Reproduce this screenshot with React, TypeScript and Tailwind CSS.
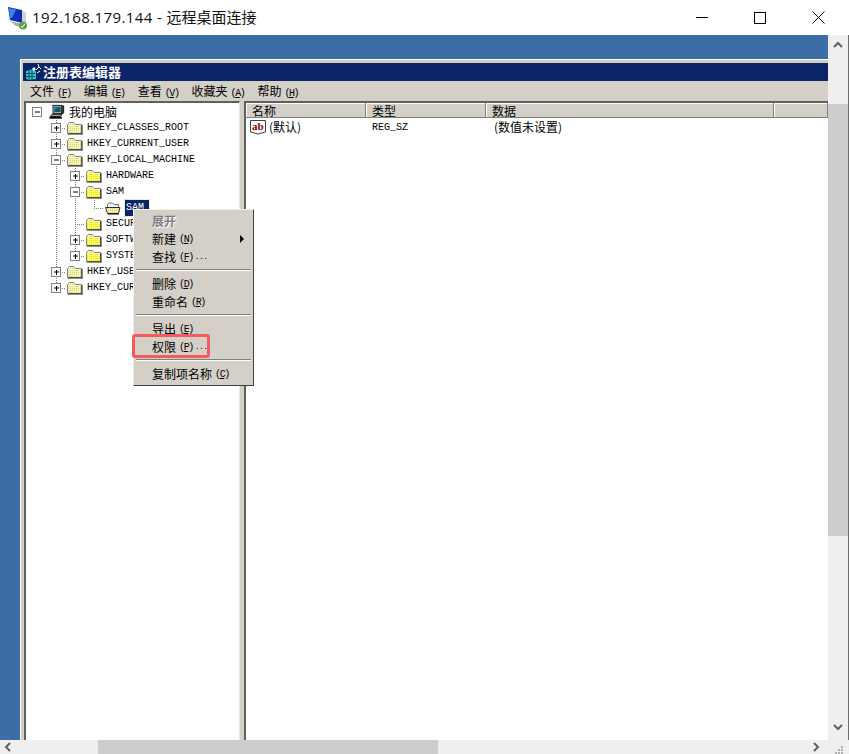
import React from "react";

const mono = "font-['Liberation_Mono','Noto_Sans_CJK_SC',monospace]";
const cjk = "font-['Noto_Sans_CJK_SC','Liberation_Mono',sans-serif]";

// Small "(F)" style access key after a menu label
const Key: React.FC<{ k: string }> = ({ k }) => (
  <span className={`${mono} ml-[3px] text-[10px] tracking-[-1.4px]`}>
    (<u>{k}</u>)
  </span>
);

const Folder: React.FC<{ open?: boolean; pale?: boolean }> = ({ open, pale }) => (
  <svg width="16" height="14" viewBox="0 0 16 14" className="shrink-0">
    <defs>
      <pattern id="ditherBright" width="2" height="2" patternUnits="userSpaceOnUse">
        <rect width="2" height="2" fill="#ffff00" />
        <rect width="1" height="1" fill="#fffff0" />
        <rect x="1" y="1" width="1" height="1" fill="#e8e860" />
      </pattern>
      <pattern id="ditherPale" width="2" height="2" patternUnits="userSpaceOnUse">
        <rect width="2" height="2" fill="#f0f080" />
        <rect width="1" height="1" fill="#ffffff" />
        <rect x="1" y="1" width="1" height="1" fill="#d8d890" />
      </pattern>
    </defs>
    {open ? (
      <g>
        <path d="M2.5 11 V3.5 L4 2 H7.5 L9 3.5 H13.5 V6" fill="#efefef" stroke="#707070" />
        <path d="M0.5 6.5 H15 L13.5 12.5 H2.5 Z" fill="url(#ditherPale)" stroke="#303030" />
        <path d="M3 13 H14" stroke="#000" />
      </g>
    ) : (
      <g>
        <path d="M0.5 12.5 V3.5 L2.5 1.5 H6.5 L8.5 3.5 H14.5 V12.5 Z" fill={pale ? "url(#ditherPale)" : "url(#ditherBright)"} stroke="#808080" />
        <path d="M1 4.5 H14" stroke="#fffff0" />
        <path d="M1 13 H15.5 M15 4 V13.5" stroke="#202020" />
      </g>
    )}
  </svg>
);

const Computer = () => (
  <svg width="16" height="16" viewBox="0 0 18 16" className="shrink-0">
    <rect x="4.5" y="0.5" width="10" height="9" fill="#c0c0c0" stroke="#000" />
    <rect x="6" y="2" width="7" height="6" fill="#0a5a6a" />
    <path d="M6 2 H10 V3 H7 V5 H6 Z" fill="#2a9aa8" />
    <path d="M14.5 2 L16.5 1 V9 L14.5 10 Z" fill="#606060" stroke="#000" />
    <path d="M3.5 10.5 H14.5 L13 13 H1.5 Z" fill="#a8a8a8" stroke="#000" />
    <path d="M0.5 14.5 H14.5" stroke="#000" strokeWidth="2" />
  </svg>
);

const Box: React.FC<{ x: number; open: boolean }> = ({ x, open }) => (
  <g>
    <rect x={x - 4.5} y="3.5" width="9" height="9" fill="#fff" stroke="#808080" />
    <path d={`M${x - 2} 8 H${x + 3}`} stroke="#000" />
    {!open && <path d={`M${x + 0.5} 6 V11`} stroke="#000" />}
  </g>
);

const dots = { stroke: "#808080", strokeDasharray: "1 1" };

type RowProps = {
  width: number;
  guides: number[];
  branchFrom?: number;
  branchTo?: number;
  endGuide?: boolean;
  box?: { x: number; open: boolean };
  icon: React.ReactNode;
  label: string;
  selected?: boolean;
  cn?: boolean;
};

// One tree line: dotted connectors and expander box, then icon and label
const TreeRow: React.FC<RowProps> = ({ width, guides, branchFrom, branchTo, endGuide, box, icon, label, selected, cn }) => (
  <div className="flex h-4 items-center whitespace-nowrap">
    <svg width={width} height="16" className="shrink-0">
      {guides.map((g) => (
        <path key={g} d={`M${g + 0.5} 0 V16`} {...dots} />
      ))}
      {branchFrom !== undefined && branchTo !== undefined && (
        <g>
          <path d={`M${branchFrom + 0.5} 0 V${endGuide ? 8 : 16}`} {...dots} />
          <path d={`M${branchFrom} 8.5 H${branchTo}`} {...dots} />
        </g>
      )}
      {box && <Box x={box.x} open={box.open} />}
    </svg>
    {icon}
    <span
      className={`ml-[4px] text-[10px] leading-4 ${cn ? `${cjk} -mt-px text-[12px]` : mono} ${
        selected ? "-ml-px h-4 bg-[#0a246a] pl-px pr-[5px] text-white outline-1 outline-dotted outline-[#d8d8a0]" : "text-black"
      }`}
    >
      {label}
    </span>
  </div>
);

const Tree = () => (
  <div className="pt-px">
    <TreeRow width={23} guides={[]} box={{ x: 11, open: true }} icon={<Computer />} label="我的电脑" cn />
    <TreeRow width={41} guides={[]} branchFrom={30} branchTo={40} box={{ x: 30, open: false }} icon={<Folder pale />} label="HKEY_CLASSES_ROOT" />
    <TreeRow width={41} guides={[]} branchFrom={30} branchTo={40} box={{ x: 30, open: false }} icon={<Folder pale />} label="HKEY_CURRENT_USER" />
    <TreeRow width={41} guides={[]} branchFrom={30} branchTo={40} box={{ x: 30, open: true }} icon={<Folder pale />} label="HKEY_LOCAL_MACHINE" />
    <TreeRow width={60} guides={[30]} branchFrom={49} branchTo={59} box={{ x: 49, open: false }} icon={<Folder />} label="HARDWARE" />
    <TreeRow width={60} guides={[30]} branchFrom={49} branchTo={59} box={{ x: 49, open: true }} icon={<Folder />} label="SAM" />
    <TreeRow width={79} guides={[30, 49]} branchFrom={68} branchTo={78} endGuide icon={<Folder open />} label="SAM" selected />
    <TreeRow width={60} guides={[30]} branchFrom={49} branchTo={59} icon={<Folder />} label="SECURITY" />
    <TreeRow width={60} guides={[30]} branchFrom={49} branchTo={59} box={{ x: 49, open: false }} icon={<Folder />} label="SOFTWARE" />
    <TreeRow width={60} guides={[30]} branchFrom={49} branchTo={59} endGuide box={{ x: 49, open: false }} icon={<Folder />} label="SYSTEM" />
    <TreeRow width={41} guides={[]} branchFrom={30} branchTo={40} box={{ x: 30, open: false }} icon={<Folder pale />} label="HKEY_USERS" />
    <TreeRow width={41} guides={[]} branchFrom={30} branchTo={40} endGuide box={{ x: 30, open: false }} icon={<Folder pale />} label="HKEY_CURRENT_CONFIG" />
  </div>
);

const MenuItem: React.FC<{ label: string; k?: string; dots?: boolean; disabled?: boolean; arrow?: boolean }> = ({
  label,
  k,
  dots: ell,
  disabled,
  arrow,
}) => (
  <div className={`relative flex h-[18px] items-center pl-[18px] text-[12px] ${disabled ? "font-bold text-[#808080] [text-shadow:1px_1px_0_#fff]" : "text-black"}`}>
    <span>{label}</span>
    {k && <Key k={k} />}
    {ell && <span className={`${mono} ml-[2px] text-[8px] tracking-[-0.6px]`}>...</span>}
    {arrow && (
      <svg width="5" height="8" viewBox="0 0 5 8" className="absolute right-2 top-[5px]">
        <path d="M0 0 L4 4 L0 8 Z" fill="#000" />
      </svg>
    )}
  </div>
);

const MenuSep = () => <div className="mx-[2px] mt-[3px] mb-[4px] h-[2px] border-t border-b border-t-[#808080] border-b-white" />;

const ContextMenu = () => (
  <div className={`${cjk} absolute left-[133px] top-[209px] h-[177px] w-[121px] border border-t-[#f2f0ea] border-l-[#f2f0ea] border-r-[#404040] border-b-[#404040] bg-[#d4d0c8] pt-[2px]`}>
    <MenuItem label="展开" disabled />
    <MenuItem label="新建" k="N" arrow />
    <MenuItem label="查找" k="F" dots />
    <MenuSep />
    <MenuItem label="删除" k="D" />
    <MenuItem label="重命名" k="R" />
    <MenuSep />
    <MenuItem label="导出" k="E" />
    <MenuItem label="权限" k="P" dots />
    <MenuSep />
    <MenuItem label="复制项名称" k="C" />
  </div>
);

const HeaderCell: React.FC<{ w: string; label?: string }> = ({ w, label }) => (
  <div className={`${w} h-[15px] shrink-0 border-r border-b border-r-[#808080] border-b-[#808080] pl-[6px] text-[12px] leading-[15px] shadow-[inset_1px_1px_0_#fff]`}>
    {label}
  </div>
);

const RdpIcon = () => (
  <svg width="22" height="24" viewBox="0 0 22 24" className="shrink-0">
    <path d="M1 1 L15 4 V17 L3 14 Z" fill="#0f2fb0" />
    <path d="M2 2 L9 3.5 L5 12 L3 12 Z" fill="#3f7fe8" />
    <path d="M15 4 L19 7 V19 L15 17 Z" fill="#cfd3da" />
    <path d="M3 15 L15 18 L19 20 L19 22 L9 20 Z" fill="#a9adb6" />
    <circle cx="16" cy="19.5" r="4" fill="#5f9e4a" />
    <path d="M14 20 L15.5 21.5 L18 17.5" stroke="#fff" strokeWidth="1" fill="none" />
  </svg>
);

const RegeditIcon = () => (
  <svg width="16" height="17" viewBox="0 0 16 17" className="shrink-0">
    <path d="M1 7 L9 5 L11 8 V15 L3 16 L1 14 Z" fill="#35c8c8" />
    <path d="M1 9.5 H10 M1 12.5 H10 M4 6 V16 M7 6 V16" stroke="#0a4a60" />
    <path d="M9 3 L11 5 L9 7 L7 5 Z" fill="#e8ffff" />
    <path d="M13 0 L14 3 L11 6 M14 3 L16 5 M12 9 L15 7" stroke="#fff" fill="none" />
  </svg>
);

export default function App() {
  return (
    <div className={`${cjk} relative flex h-[754px] w-[849px] flex-col overflow-hidden bg-white`}>
      {/* RDP title bar */}
      <div className="flex h-[35px] shrink-0 items-center pl-[7px]">
        <RdpIcon />
        <span className="ml-[3px] font-['Open_Sans','Noto_Sans_CJK_SC',sans-serif] text-[15px] text-[#111]">
          <span className="tracking-[0.4px]">192.168.179.144 - </span>远程桌面连接
        </span>
        <div className="ml-auto flex items-center gap-[46px] pr-[24px]">
          <div className="h-px w-3 bg-black" />
          <div className="h-3 w-3 border border-black" />
          <svg width="13" height="13" viewBox="0 0 13 13">
            <path d="M0.5 0.5 L12.5 12.5 M12.5 0.5 L0.5 12.5" stroke="#000" />
          </svg>
        </div>
      </div>

      <div className="flex min-h-0 flex-1">
        {/* Remote desktop */}
        <div className="flex w-[828px] shrink-0 flex-col bg-[#3a6ea5] pl-5 pt-6">
          <div className="flex min-h-0 flex-1 flex-col border-t border-l border-white bg-[#d4d0c8] pl-[1px] pt-[3px]">
            <div className="ml-[1px] flex h-[18px] shrink-0 items-center bg-[#0a246a] pl-[2px]">
              <RegeditIcon />
              <span className="ml-[2px] text-[13px] font-bold leading-[18px] text-white">注册表编辑器</span>
            </div>
            <div className="flex h-5 shrink-0 items-center gap-[13px] pl-[8px] text-[12px] text-black">
              <span>文件<Key k="F" /></span>
              <span>编辑<Key k="E" /></span>
              <span>查看<Key k="V" /></span>
              <span>收藏夹<Key k="A" /></span>
              <span>帮助<Key k="H" /></span>
            </div>
            <div className="flex min-h-0 flex-1 pl-[2px]">
              <div className="w-[216px] shrink-0 border-t-2 border-l-2 border-r border-t-[#606060] border-l-[#606060] border-r-[#e8e8e8] bg-white">
                <Tree />
              </div>
              <div className="w-[4px] shrink-0" />
              <div className="min-w-0 flex-1 border-t-2 border-l-2 border-t-[#606060] border-l-[#606060] bg-white">
                <div className="flex bg-[#d4d0c8] text-black">
                  <HeaderCell w="w-[120px]" label="名称" />
                  <HeaderCell w="w-[120px]" label="类型" />
                  <HeaderCell w="w-[288px]" label="数据" />
                  <HeaderCell w="w-[54px]" />
                </div>
                <div className="flex h-4 items-center pl-[4px] pt-[2px] text-[12px]">
                  <div className="flex w-[120px] items-center">
                    <svg width="17" height="16" viewBox="0 0 17 16" className="shrink-0">
                      <path d="M0.5 1.5 H15.5 V13 L8 15 L0.5 13 Z" fill="#fff" stroke="#404040" />
                      <text x="2" y="11" fill="#8b0000" fontFamily="Liberation Serif" fontWeight="bold" fontSize="11">ab</text>
                    </svg>
                    <span className="ml-[2px]">(默认)</span>
                  </div>
                  <span className={`${mono} w-[124px] pl-[2px] text-[10px]`}>REG_SZ</span>
                  <span>(数值未设置)</span>
                </div>
              </div>
            </div>
          </div>
        </div>
        {/* Vertical scrollbar */}
        <div className="flex w-[20px] shrink-0 flex-col bg-[#efefef]">
          <div className="flex h-[69px] shrink-0 items-start justify-center pt-[6px]">
            <svg width="10" height="7" viewBox="0 0 10 7">
              <path d="M1 6 L5 2 L9 6" stroke="#606060" strokeWidth="2" fill="none" />
            </svg>
          </div>
          <div className="h-[432px] shrink-0 bg-[#cdcdcd]" />
          <div className="flex flex-1 items-end justify-center pb-[9px]">
            <svg width="10" height="7" viewBox="0 0 10 7">
              <path d="M1 1 L5 5 L9 1" stroke="#606060" strokeWidth="2" fill="none" />
            </svg>
          </div>
        </div>
        <div className="w-px shrink-0 bg-[#6d6d6d]" />
      </div>

      {/* Horizontal scrollbar */}
      <div className="flex h-[14px] shrink-0 items-center bg-[#efefef]">
        <svg width="8" height="10" viewBox="0 0 8 10" className="ml-[4px] shrink-0">
          <path d="M6 1 L2 5 L6 9" stroke="#606060" strokeWidth="2" fill="none" />
        </svg>
        <div className="ml-[86px] h-full w-[340px] shrink-0 bg-[#cdcdcd]" />
        <svg width="8" height="10" viewBox="0 0 8 10" className="ml-[374px] shrink-0">
          <path d="M2 1 L6 5 L2 9" stroke="#606060" strokeWidth="2" fill="none" />
        </svg>
        <svg width="10" height="8" viewBox="0 0 10 8" className="ml-[14px] mt-[5px] shrink-0">
          <path d="M7 0 H9 V2 H7 Z M4 3 H6 V5 H4 Z M7 3 H9 V5 H7 Z M1 6 H3 V8 H1 Z M4 6 H6 V8 H4 Z M7 6 H9 V8 H7 Z" fill="#b0b0b0" />
        </svg>
      </div>

      <ContextMenu />
      {/* Red callout over the permissions item */}
      <div className="absolute left-[132px] top-[334px] h-[24px] w-[78px] rounded-[3px] border-[3px] border-[#f25c5c]" />
    </div>
  );
}
